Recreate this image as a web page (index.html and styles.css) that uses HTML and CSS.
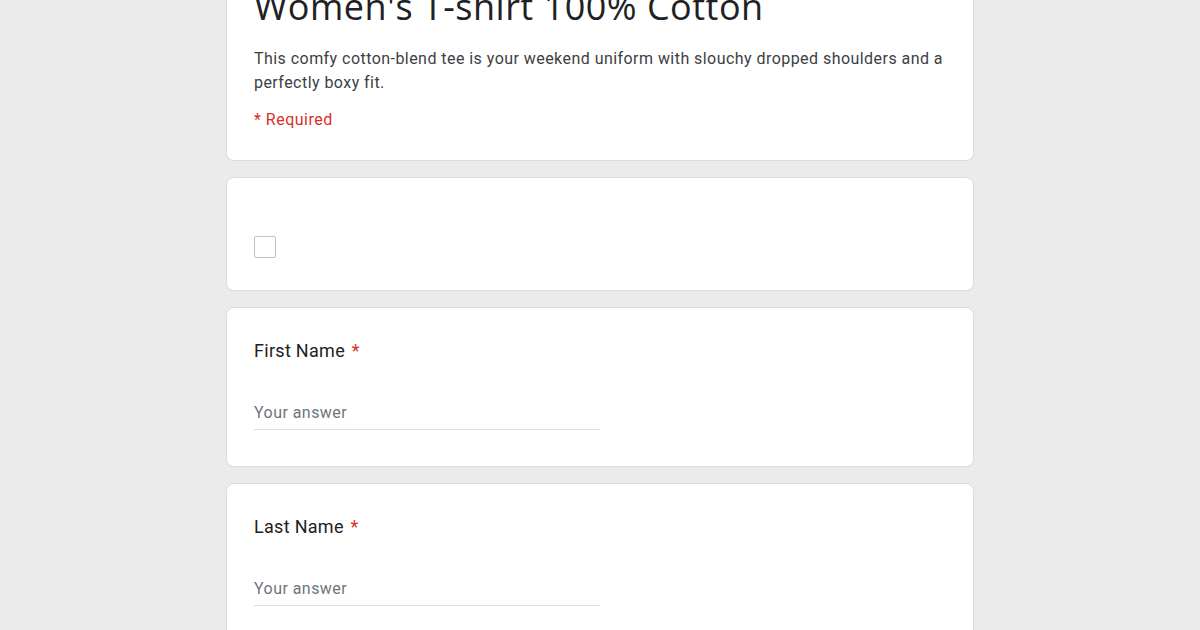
FILE: index.html
```html
<!DOCTYPE html>
<html lang="en">
<head>
<meta charset="utf-8">
<title>Women's T-shirt 100% Cotton</title>
<link rel="stylesheet" href="styles.css">
</head>
<body>
<main class="form">
  <section class="card header-card">
    <h1 class="form-title">Women's T-shirt 100% Cotton</h1>
    <p class="form-desc">This comfy cotton-blend tee is your weekend uniform with slouchy dropped shoulders and a perfectly boxy fit.</p>
    <p class="required-note">* Required</p>
  </section>
  <section class="card check-card">
    <span class="checkbox"></span>
  </section>
  <section class="card question">
    <div class="q-title">First Name <span class="star">*</span></div>
    <div class="answer">Your answer</div>
  </section>
  <section class="card question">
    <div class="q-title">Last Name <span class="star">*</span></div>
    <div class="answer">Your answer</div>
  </section>
</main>
</body>
</html>
```
FILE: styles.css
```css
html, body {
  margin: 0;
  padding: 0;
}
body {
  background: #ebebeb;
  font-family: Roboto, "Liberation Sans", sans-serif;
  color: #202124;
  overflow: hidden;
}
.form {
  width: 748px;
  margin: -13px auto 0;
  display: flex;
  flex-direction: column;
  gap: 16px;
}
.card {
  background: #fff;
  border: 1px solid #dadce0;
  border-radius: 8px;
  padding: 0 27px;
}
.header-card {
  border-top: none;
  border-radius: 0 0 8px 8px;
  padding-bottom: 28px;
}
.form-title {
  margin: 0;
  font-family: "Open Sans", sans-serif;
  font-weight: 400;
  font-size: 36px;
  letter-spacing: 0.5px;
  line-height: 40px;
  color: #202124;
}
.form-desc {
  margin: 20px 0 0;
  font-size: 16px;
  letter-spacing: 0.45px;
  line-height: 24px;
  color: #3c4043;
}
.required-note {
  margin: 13px 0 0;
  font-size: 16px;
  letter-spacing: 0.5px;
  line-height: 24px;
  color: #d93025;
}
.check-card {
  padding-top: 58px;
  padding-bottom: 32px;
}
.checkbox {
  display: block;
  width: 20px;
  height: 20px;
  border: 1.5px solid #c4c4c4;
  border-radius: 2px;
}
.question {
  padding-top: 31px;
  padding-bottom: 36px;
}
.q-title {
  font-size: 18px;
  letter-spacing: 0.3px;
  line-height: 24px;
  color: #202124;
}
.star {
  color: #d93025;
  margin-left: 2px;
}
.answer {
  margin-top: 38px;
  width: 346px;
  font-size: 16px;
  letter-spacing: 0.45px;
  line-height: 24px;
  color: #70757a;
  padding-bottom: 4px;
  border-bottom: 1px solid #e0e0e0;
}
```
